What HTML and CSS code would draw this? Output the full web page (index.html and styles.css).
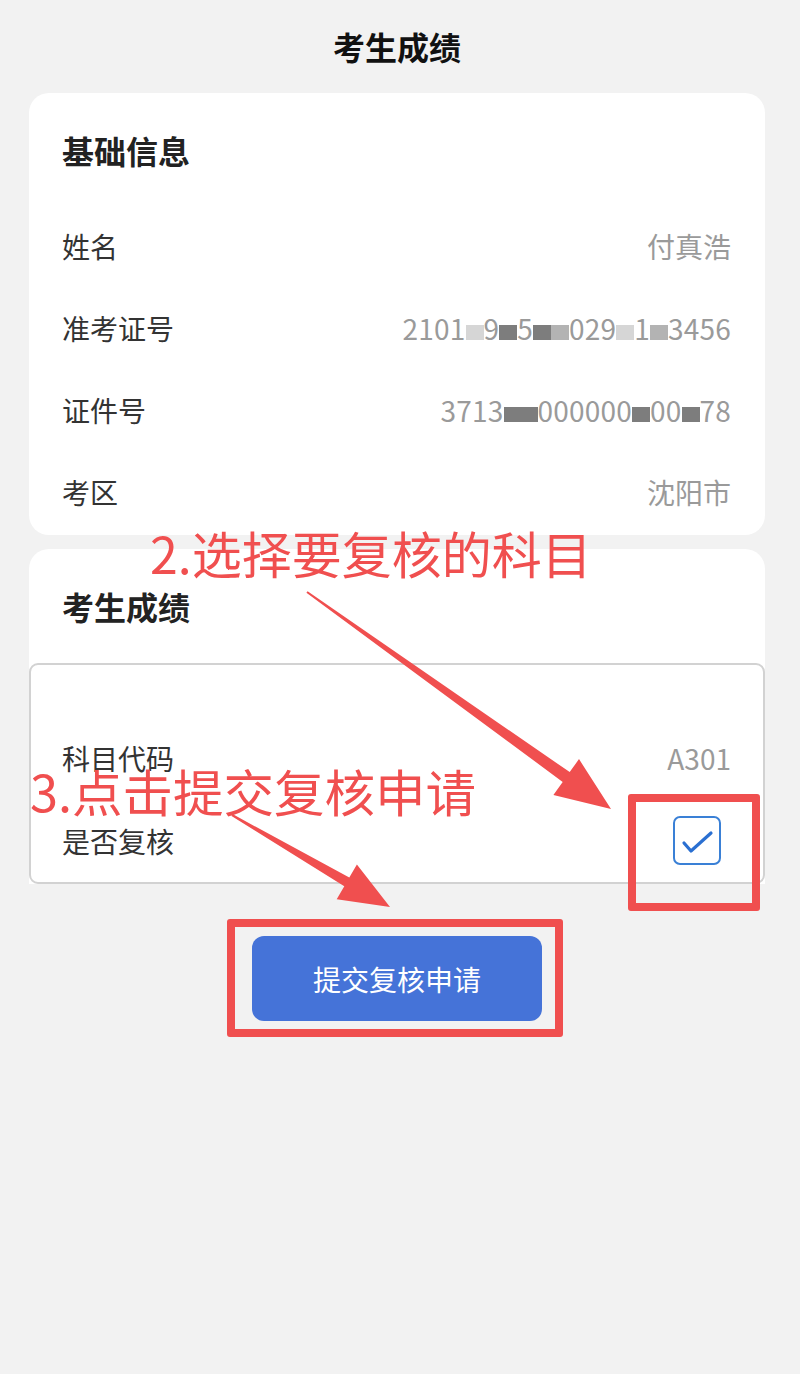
FILE: index.html
```html
<!DOCTYPE html>
<html lang="zh-CN">
<head>
<meta charset="utf-8">
<title>考生成绩</title>
<link rel="stylesheet" href="styles.css">
</head>
<body>
<div class="page">
  <div class="topbar">考生成绩</div>

  <section class="card info">
    <h2 class="card-title">基础信息</h2>
    <div class="row"><span class="label">姓名</span><span class="value">付真浩</span></div>
    <div class="row"><span class="label">准考证号</span><span class="value mono">2101<i class="mask light"></i>9<i class="mask"></i>5<i class="mask"></i><i class="mask mid"></i>029<i class="mask light"></i>1<i class="mask mid"></i>3456</span></div>
    <div class="row"><span class="label">证件号</span><span class="value mono">3713<i class="mask wide"></i>000000<i class="mask"></i>00<i class="mask"></i>78</span></div>
    <div class="row"><span class="label">考区</span><span class="value">沈阳市</span></div>
  </section>

  <section class="card scores">
    <h2 class="card-title">考生成绩</h2>
    <div class="subject">
      <div class="row sub-row"><span class="label">科目代码</span><span class="value">A301</span></div>
      <div class="row sub-row"><span class="label">是否复核</span>
        <span class="checkbox">
          <svg viewBox="0 0 48 49" width="48" height="49"><path d="M11 27 L18 35 L38 17" fill="none" stroke="#2a6fd1" stroke-width="3.2" stroke-linecap="round" stroke-linejoin="round"/></svg>
        </span>
      </div>
    </div>
  </section>

  <div class="actions">
    <button class="submit">提交复核申请</button>
  </div>

  <div class="note note-2">2.选择要复核的科目</div>
  <div class="note note-3">3.点击提交复核申请</div>
  <div class="hl hl-check"></div>
  <div class="hl hl-btn"></div>
  <svg class="arrows" viewBox="0 0 800 1374" width="800" height="1374">
    <polygon fill="#f04f4f" points="307.6,591.2 569.7,772.1 579,759.1 611,809 553.4,794.9 562.7,781.9 306.4,592.8"/>
    <polygon fill="#f04f4f" points="232.5,814.1 349.3,877.6 356.9,864.6 390,907 336.7,899.2 344.3,886.2 231.5,815.9"/>
  </svg>
</div>
</body>
</html>
```
FILE: styles.css
```css
* { box-sizing: border-box; }
html, body { margin: 0; padding: 0; }
body {
  background: #f2f2f2;
  font-family: "Noto Sans CJK SC", "Noto Sans", sans-serif;
  color: #333;
}
.page {
  position: relative;
  width: 800px;
  height: 1374px;
  padding-left: 29px;
}
.topbar {
  width: 736px;
  height: 93px;
  line-height: 93px;
  text-align: center;
  font-size: 32px;
  font-weight: 700;
  color: #111;
}
.card {
  width: 736px;
  background: #fff;
  border-radius: 20px;
}
.card-title {
  margin: 0;
  padding: 37px 33px 35px;
  line-height: 40px;
  font-size: 32px;
  font-weight: 700;
  color: #222;
}
.info { padding-bottom: 2px; }
.row {
  display: flex;
  align-items: center;
  justify-content: space-between;
  height: 82px;
  padding: 0 34px 0 33px;
  font-size: 28px;
}
.label { color: #333; }
.value { color: #9a9a9a; white-space: nowrap; }
.mono { letter-spacing: 0.2px; }
.mask {
  display: inline-block;
  width: 18px;
  height: 15px;
  background: #7d7d7d;
  vertical-align: middle;
}
.mask.light { background: #d6d6d6; }
.mask.mid { background: #b3b3b3; }
.mask.wide { width: 34px; }

.scores {
  margin-top: 14px;
  border-radius: 20px 20px 0 0;
}
.scores .card-title { padding-bottom: 37px; }
.subject {
  background: #fff;
  border: 2px solid #d2d2d2;
  border-radius: 9px;
  padding-top: 51px;
}
.sub-row { height: 83px; padding: 0 32px 0 31px; }
.checkbox {
  width: 48px;
  height: 49px;
  margin-right: 10px;
  border: 2px solid #3a80d6;
  border-radius: 7px;
  display: flex;
}
.checkbox svg { display: block; margin: -2px; }

.actions {
  width: 736px;
  display: flex;
  justify-content: center;
  padding-top: 52px;
}
.submit {
  width: 290px;
  height: 85px;
  border: 0;
  border-radius: 12px;
  background: #4573d8;
  color: #fff;
  font-family: "Noto Sans CJK SC", sans-serif;
  font-size: 28px;
}

.note {
  position: absolute;
  font-size: 50px;
  line-height: 50px;
  color: #f04f4f;
  white-space: nowrap;
}
.note-2 { left: 150px; top: 527px; }
.note-3 { left: 30px; top: 765px; font-size: 50.5px; }
.hl {
  position: absolute;
  border: 8px solid #f04f4f;
  border-radius: 3px;
}
.hl-check { left: 628px; top: 794px; width: 132px; height: 117px; }
.hl-btn { left: 227px; top: 919px; width: 336px; height: 118px; }
.arrows {
  position: absolute;
  left: 0;
  top: 0;
  pointer-events: none;
}
```
